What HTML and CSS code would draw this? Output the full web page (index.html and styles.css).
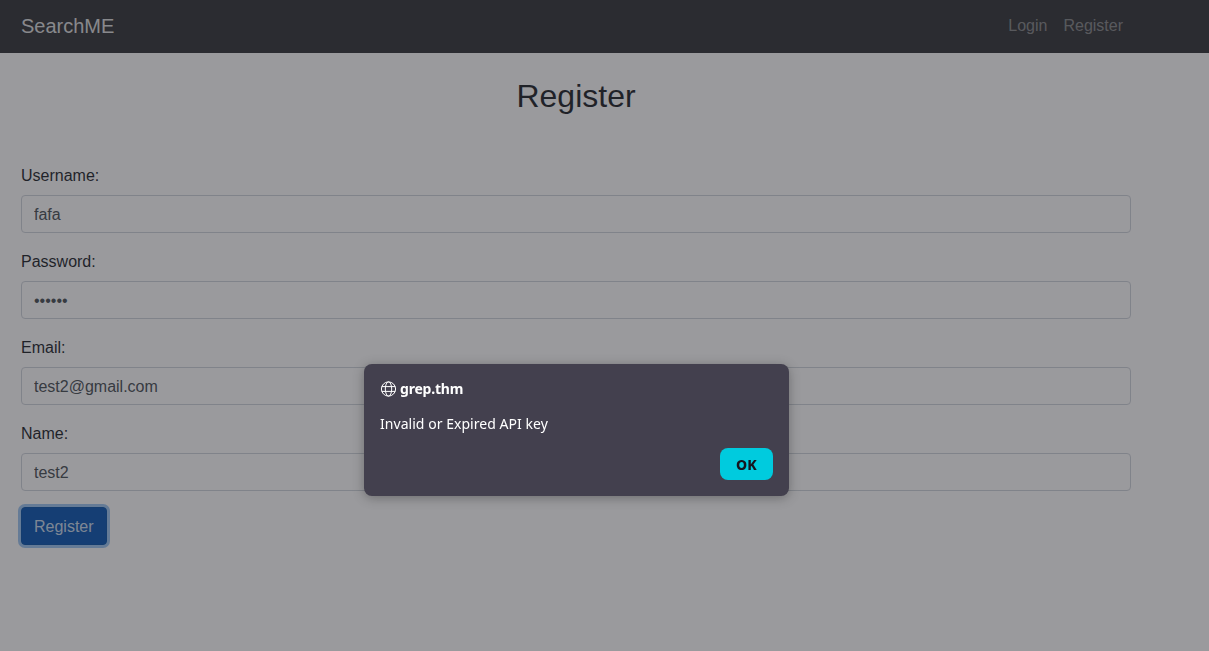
FILE: index.html
```html
<!DOCTYPE html>
<html lang="en">
<head>
<meta charset="utf-8">
<title>SearchME - Register</title>
<link rel="stylesheet" href="styles.css">
</head>
<body>
<nav class="navbar">
  <div class="navbar-inner">
    <a class="brand" href="#">SearchME</a>
    <div class="nav-links">
      <a class="nav-link" href="#">Login</a>
      <a class="nav-link" href="#">Register</a>
    </div>
  </div>
</nav>
<main class="container">
  <h2 class="page-title">Register</h2>
  <form class="form">
    <div class="form-group">
      <label class="label" for="username">Username:</label>
      <input class="input" id="username" type="text" value="fafa">
    </div>
    <div class="form-group">
      <label class="label" for="password">Password:</label>
      <input class="input" id="password" type="password" value="secret">
    </div>
    <div class="form-group">
      <label class="label" for="email">Email:</label>
      <input class="input" id="email" type="email" value="test2@gmail.com">
    </div>
    <div class="form-group">
      <label class="label" for="name">Name:</label>
      <input class="input" id="name" type="text" value="test2">
    </div>
    <button class="btn-primary" type="button">Register</button>
  </form>
</main>
<div class="backdrop">
  <div class="dialog" role="alertdialog">
    <div class="dialog-title">
      <svg class="globe" viewBox="0 0 16 16" width="16" height="16" fill="none" stroke="currentColor" stroke-width="1">
        <circle cx="8.5" cy="8" r="7.1"/>
        <ellipse cx="8.5" cy="8" rx="3.2" ry="7.1"/>
        <path d="M1.8 5.6h13.4M1.8 10.4h13.4"/>
      </svg>
      <span class="dialog-name">grep.thm</span>
    </div>
    <p class="dialog-message">Invalid or Expired API key</p>
    <div class="dialog-actions">
      <button class="dialog-ok" type="button">OK</button>
    </div>
  </div>
</div>
</body>
</html>
```
FILE: styles.css
```css
* {
  box-sizing: border-box;
}

html,
body {
  height: 100%;
}

body {
  margin: 0;
  background: #fff;
  color: #16191f;
  font-family: "Liberation Sans", Arial, sans-serif;
  font-size: 16px;
  line-height: 1.5;
}

.navbar {
  background: #2b2d31;
  height: 53px;
}

.navbar-inner {
  width: 1152px;
  height: 100%;
  padding: 0 21px 2px;
  display: flex;
  align-items: center;
  justify-content: space-between;
}

.brand {
  color: rgba(255, 255, 255, 0.85);
  font-size: 20px;
  text-decoration: none;
}

.nav-links {
  display: flex;
}

.nav-link {
  color: rgba(255, 255, 255, 0.42);
  padding: 0 8px;
  text-decoration: none;
}

.container {
  width: 1152px;
  padding: 0 21px;
}

.page-title {
  margin: 24px 0 48px;
  font-size: 32px;
  font-weight: 500;
  line-height: 1.2;
  text-align: center;
}

.form-group {
  margin-bottom: 16px;
}

.label {
  display: block;
  padding-top: 1px;
  margin-bottom: 7px;
}

.input {
  display: block;
  width: 100%;
  height: 38px;
  padding: 7px 12px 5px;
  border: 1px solid #ced4da;
  border-radius: 4px;
  background: #fff;
  color: #42494f;
  font: inherit;
}

.btn-primary {
  display: block;
  height: 38px;
  padding: 7px 12px 5px;
  border: 1px solid #004ea8;
  border-radius: 4px;
  background: #0050b0;
  color: rgba(255, 255, 255, 0.8);
  font: inherit;
  box-shadow: 0 0 0 3px rgba(30, 125, 225, 0.45);
}

.backdrop {
  position: fixed;
  inset: 0;
  background: rgba(43, 43, 50, 0.48);
}

.dialog {
  position: absolute;
  left: 364px;
  top: 364px;
  width: 425px;
  height: 132px;
  padding: 16px;
  border-radius: 8px;
  background: #43404e;
  color: #fff;
  font-family: "Noto Sans", sans-serif;
  font-size: 14px;
  box-shadow: 0 2px 12px rgba(0, 0, 0, 0.3);
}

.dialog-title {
  display: flex;
  align-items: center;
  gap: 4px;
  height: 18px;
  font-weight: 700;
  line-height: 18px;
}

.globe {
  flex: none;
}

.dialog-name {
  letter-spacing: -0.2px;
}

.dialog-message {
  margin: 17px 0 0;
  line-height: 18px;
  letter-spacing: 0.04px;
}

.dialog-actions {
  display: flex;
  justify-content: flex-end;
  margin-top: 15px;
}

.dialog-ok {
  width: 53px;
  height: 32px;
  border: 0;
  border-radius: 8px;
  background: #00cbde;
  color: #16141f;
  font-family: inherit;
  font-size: 14px;
  font-weight: 800;
  letter-spacing: 0.3px;
}
```
